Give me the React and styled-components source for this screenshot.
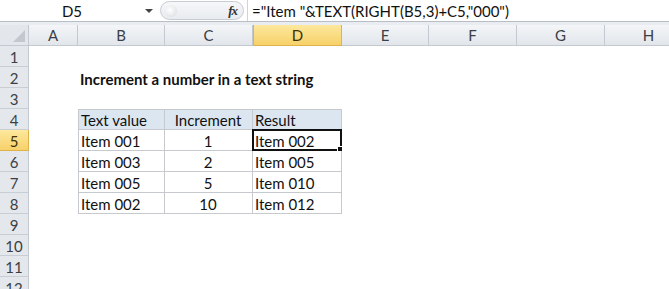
import React from "react";
import styled, { createGlobalStyle } from "styled-components";

const Global = createGlobalStyle`
  html, body { margin: 0; padding: 0; background: #fff; overflow: hidden; }
  body { font-family: "Lato", "Open Sans", sans-serif; }
`;

const FONT = `"Lato", "Open Sans", sans-serif`;

const Page = styled.div`
  width: 669px;
  height: 289px;
  display: flex;
  flex-direction: column;
  background: #fff;
  overflow: hidden;
`;

const FormulaBar = styled.div`
  flex-shrink: 0;
  display: flex;
  align-items: stretch;
  height: 21px;
  border-bottom: 1px solid #b9bec6;
  background: #fff;
`;

const NameBox = styled.div`
  width: 156px;
  position: relative;
  display: flex;
  align-items: center;
  justify-content: center;
  font: 15px ${FONT};
  color: #111;
  padding-right: 12px;
  box-sizing: border-box;
`;

const DropArrow = styled.span`
  position: absolute;
  right: 3px;
  top: 9px;
  width: 0;
  height: 0;
  border-left: 4px solid transparent;
  border-right: 4px solid transparent;
  border-top: 4px solid #444;
`;

const FxArea = styled.div`
  width: 84px;
  margin: 1px 0 1px 4px;
  border: 1px solid #c9cdd3;
  border-radius: 10px;
  background: linear-gradient(#f6f7f9, #e8ebef);
  display: flex;
  align-items: center;
  justify-content: flex-end;
  padding-right: 6px;
  box-sizing: border-box;
  position: relative;
`;

const Knob = styled.span`
  position: absolute;
  left: 4px;
  top: 3px;
  width: 12px;
  height: 12px;
  border-radius: 50%;
  background: radial-gradient(circle at 40% 40%, #ffffff, #d6dade);
`;

const Fx = styled.span`
  font: italic bold 13px "Liberation Serif", serif;
  color: #333;
  letter-spacing: -1px;
`;

const Divider = styled.div`
  width: 1px;
  background: #d0d4da;
  margin-left: 3px;
`;

const FormulaText = styled.div`
  flex: 1;
  display: flex;
  align-items: center;
  padding-left: 4px;
  font: 15px ${FONT};
  color: #111;
  white-space: nowrap;
`;

const Spacer = styled.div`
  flex-shrink: 0;
  height: 3px;
  background: #e9ecf0;
`;

const Sheet = styled.div`
  flex-shrink: 0;
  display: grid;
  grid-template-columns: 29px 49px 87px 88px 89px 87px 88px 88px 88px;
  grid-auto-rows: 21px;
  position: relative;
`;

const Corner = styled.div`
  background: #e3e7ec;
  border-right: 1px solid #c3c9d1;
  border-bottom: 1px solid #c3c9d1;
  box-sizing: border-box;
  position: relative;
  &::after {
    content: "";
    position: absolute;
    right: 3px;
    bottom: 3px;
    width: 0;
    height: 0;
    border-left: 12px solid transparent;
    border-bottom: 12px solid #c4c8cd;
  }
`;

const ColHead = styled.div`
  display: flex;
  align-items: center;
  justify-content: center;
  font: 15px ${FONT};
  color: ${(p) => (p.$active ? "#3d3200" : "#3b3f45")};
  background: ${(p) =>
    p.$active
      ? "linear-gradient(#fde89d, #f7d16a)"
      : "linear-gradient(#f3f5f7, #e2e6eb)"};
  border-right: 1px solid ${(p) => (p.$active ? "#e0b34a" : "#c3c9d1")};
  border-left: ${(p) => (p.$active ? "1px solid #e0b34a" : "none")};
  border-bottom: 1px solid ${(p) => (p.$active ? "#e0b34a" : "#c3c9d1")};
  box-sizing: border-box;
`;

const RowHead = styled.div`
  display: flex;
  align-items: center;
  justify-content: center;
  padding-top: 1px;
  font: 15px ${FONT};
  color: ${(p) => (p.$active ? "#3d3200" : "#3b3f45")};
  background: ${(p) =>
    p.$active ? "linear-gradient(#fde89d, #f7d16a)" : "#e4e8ed"};
  border-right: 1px solid ${(p) => (p.$active ? "#e0b34a" : "#c3c9d1")};
  border-bottom: 1px solid ${(p) => (p.$active ? "#e0b34a" : "#c9ced5")};
  box-sizing: border-box;
`;

const Cell = styled.div`
  grid-column: span ${(p) => p.$span || 1};
  display: flex;
  align-items: flex-end;
  justify-content: ${(p) =>
    p.$align === "center" ? "center" : "flex-start"};
  padding: 0 3px 0 2px;
  font: ${(p) => (p.$bold ? "bold" : "normal")} 15px ${FONT};
  color: #111;
  white-space: nowrap;
  box-sizing: border-box;
  background: ${(p) => (p.$head ? "#dce6f1" : "#fff")};
  border-right: ${(p) => (p.$table ? "1px solid #c6c9cd" : "none")};
  border-bottom: ${(p) => (p.$table ? "1px solid #c6c9cd" : "none")};
  border-left: ${(p) => (p.$first ? "1px solid #c6c9cd" : "none")};
  border-top: ${(p) => (p.$top ? "1px solid #c6c9cd" : "none")};
  position: relative;
`;

const Selection = styled.div`
  position: absolute;
  inset: -1px -1px -1px -1px;
  border: 2px solid #111;
  pointer-events: none;
  &::after {
    content: "";
    position: absolute;
    right: -4px;
    bottom: -4px;
    width: 5px;
    height: 5px;
    background: #111;
    border: 1px solid #fff;
  }
`;

const cols = ["A", "B", "C", "D", "E", "F", "G", "H"];

const table = [
  ["Text value", "Increment", "Result"],
  ["Item 001", "1", "Item 002"],
  ["Item 003", "2", "Item 005"],
  ["Item 005", "5", "Item 010"],
  ["Item 002", "10", "Item 012"],
];

function renderRow(r) {
  const cells = [];
  cells.push(
    <RowHead key="h" $active={r === 5}>
      {r}
    </RowHead>
  );
  for (let c = 0; c < 8; c++) {
    const key = `${r}-${c}`;
    if (r === 2 && c === 1) {
      cells.push(
        <Cell key={key} $bold $span={3}>
          Increment a number in a text string
        </Cell>
      );
      c += 2;
    } else if (r >= 4 && r <= 8 && c >= 1 && c <= 3) {
      const val = table[r - 4][c - 1];
      cells.push(
        <Cell
          key={key}
          $table
          $head={r === 4}
          $first={c === 1}
          $top={r === 4}
          $align={c === 2 ? "center" : "left"}
        >
          {val}
          {r === 5 && c === 3 && <Selection />}
        </Cell>
      );
    } else {
      cells.push(<Cell key={key} />);
    }
  }
  return cells;
}

export default function App() {
  const rows = [];
  for (let r = 1; r <= 12; r++) rows.push(...renderRow(r));
  return (
    <Page>
      <Global />
      <FormulaBar>
        <NameBox>
          D5
          <DropArrow />
        </NameBox>
        <FxArea>
          <Knob />
          <Fx>fx</Fx>
        </FxArea>
        <Divider />
        <FormulaText>="Item "&amp;TEXT(RIGHT(B5,3)+C5,"000")</FormulaText>
      </FormulaBar>
      <Spacer />
      <Sheet>
        <Corner />
        {cols.map((c) => (
          <ColHead key={c} $active={c === "D"}>
            {c}
          </ColHead>
        ))}
        {rows}
      </Sheet>
    </Page>
  );
}
